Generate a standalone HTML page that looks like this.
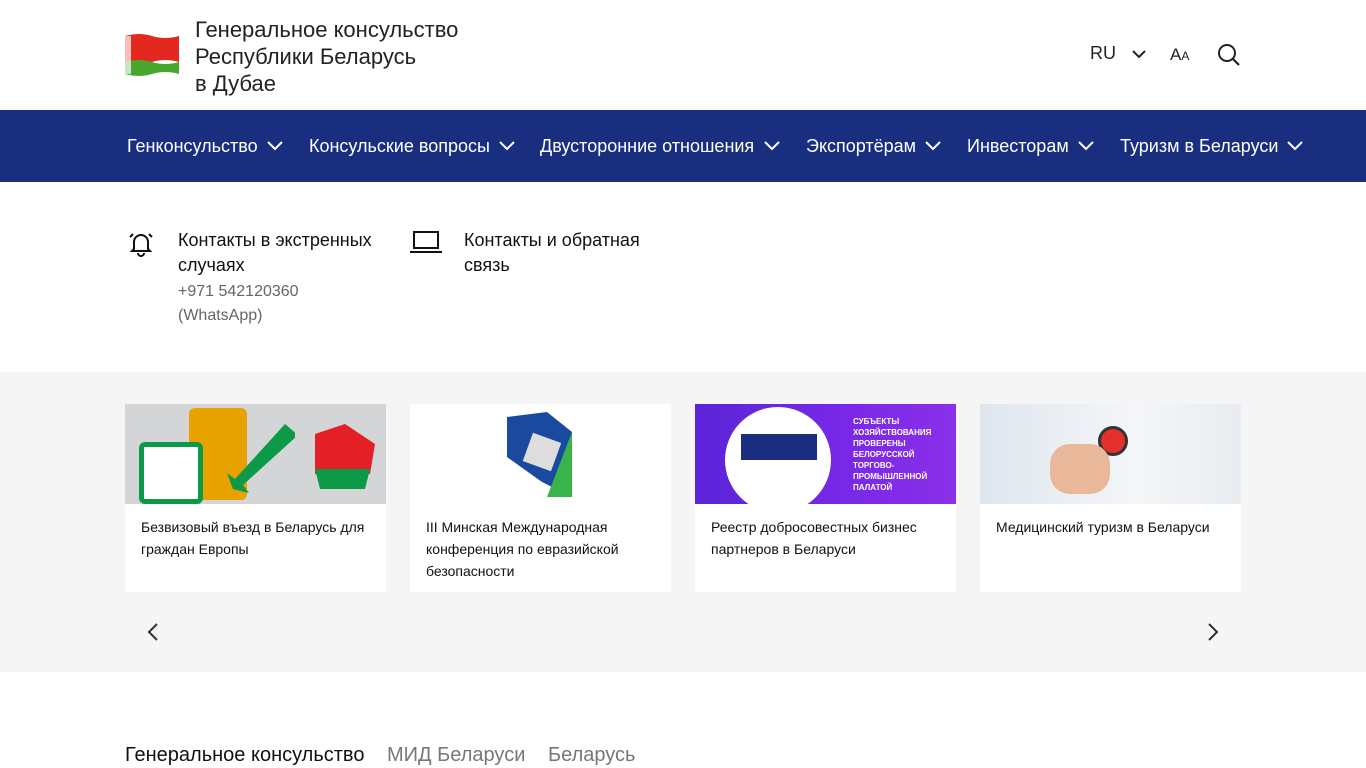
<!DOCTYPE html>
<html><head><meta charset="utf-8"><style>
*{margin:0;padding:0;box-sizing:border-box}
body{width:1366px;height:768px;overflow:hidden;font-family:"Liberation Sans",sans-serif;background:#fff;color:#222;position:relative}
.abs{position:absolute}
.nav{top:110px;left:0;width:1366px;height:72px;background:#1a2e80}
.nav span{position:absolute;top:26px;color:#fff;font-size:18px;white-space:nowrap}
.gray{top:372px;left:0;width:1366px;height:300px;background:#f5f5f5}
.card{position:absolute;top:404px;width:261px;height:188px;background:#fff}
.card .img{height:100px;position:relative;overflow:hidden}
.card p{padding:12px 16px;font-size:14px;line-height:22px;color:#111}
</style></head><body>
<svg class="abs" style="left:125px;top:32px" width="54" height="44" viewBox="0 0 54 44"><path d="M0 4 Q14 0 27 4 T54 4 V30 Q40 26 27 30 T0 30Z" fill="#e3281f"/><path d="M0 30 Q14 26 27 30 T54 30 V42 Q40 38 27 42 T0 42Z" fill="#4aa72e"/><rect x="0" y="4" width="6" height="38" fill="#fff" opacity=".7"/></svg>
<div class="abs" style="left:195px;top:16px;font-size:22px;line-height:27px;color:#222">Генеральное консульство<br>Республики Беларусь<br>в Дубае</div>
<div class="abs" style="left:1090px;top:43px;font-size:18px">RU</div>
<svg class="abs" style="left:1131px;top:48px" width="16" height="12"><path d="M2 3l6 6 6-6" stroke="#222" stroke-width="2" fill="none"/></svg>
<div class="abs" style="left:1170px;top:45px;font-size:17px">A<span style="font-size:12px">A</span></div>
<svg class="abs" style="left:1217px;top:43px" width="24" height="24"><circle cx="10" cy="10" r="8" stroke="#222" stroke-width="2" fill="none"/><path d="M16 16l6 6" stroke="#222" stroke-width="2.2"/></svg>
<div class="abs nav">
<span style="left:127px">Генконсульство</span><span style="left:309px">Консульские вопросы</span><span style="left:540px">Двусторонние отношения</span><span style="left:806px">Экспортёрам</span><span style="left:967px">Инвесторам</span><span style="left:1120px">Туризм в Беларуси</span>
<svg width="1366" height="72" style="position:absolute;left:0;top:0"><g stroke="#fff" stroke-width="2" fill="none"><path d="M268 32l7 7 7-7"/><path d="M500 32l7 7 7-7"/><path d="M765 32l7 7 7-7"/><path d="M926 32l7 7 7-7"/><path d="M1079 32l7 7 7-7"/><path d="M1288 32l7 7 7-7"/></g></svg>
</div>
<svg class="abs" style="left:127px;top:229px" width="28" height="28"><g stroke="#111" stroke-width="2" fill="none"><path d="M7 20V13a7 7 0 0 1 14 0v7l2 2H5z"/><path d="M11 24a3 3 0 0 0 6 0"/><path d="M3 8l3-3M25 8l-3-3"/></g></svg>
<div class="abs" style="left:178px;top:228px;font-size:18px;line-height:25px;color:#111">Контакты в экстренных<br>случаях</div>
<div class="abs" style="left:178px;top:280px;font-size:16px;line-height:24px;color:#666">+971 542120360<br>(WhatsApp)</div>
<svg class="abs" style="left:410px;top:230px" width="32" height="24"><rect x="4" y="2" width="24" height="16" stroke="#111" stroke-width="2" fill="none"/><path d="M0 22h32" stroke="#111" stroke-width="2"/></svg>
<div class="abs" style="left:464px;top:228px;font-size:18px;line-height:25px;color:#111">Контакты и обратная<br>связь</div>
<div class="abs gray"></div>
<div class="card" style="left:125px"><div class="img" style="background:#d4d5d7"><div class="abs" style="left:64px;top:4px;width:58px;height:92px;background:#e8a200;border-radius:6px"></div><div class="abs" style="left:14px;top:38px;width:64px;height:62px;background:#fff;border:5px solid #0c9a48;border-radius:6px"></div><svg class="abs" style="left:90px;top:15px" width="80" height="80"><path d="M70 5L20 60l-8-6 6 16 16 4-6-8 55-50z" fill="#0c9a48"/></svg><svg class="abs" style="left:170px;top:10px" width="90" height="80"><path d="M20 20l30-10 30 20-5 30H20z" fill="#e41f25"/><path d="M20 55h55l-5 20H25z" fill="#0c9a48"/></svg></div><p>Безвизовый въезд в Беларусь для граждан Европы</p></div>
<div class="card" style="left:410px"><div class="img"><svg class="abs" style="left:92px;top:8px" width="80" height="90"><path d="M5 5L45 0 70 20v65L40 70 5 45z" fill="#1a4aa0"/><rect x="25" y="25" width="30" height="30" fill="#ddd" transform="rotate(20 40 40)"/><path d="M70 20v65H45" fill="#38b44a"/></svg></div><p>III Минская Международная конференция по евразийской безопасности</p></div>
<div class="card" style="left:695px"><div class="img" style="background:linear-gradient(90deg,#5a24d8,#7a28e8 60%,#8a30e8)"><div class="abs" style="left:30px;top:3px;width:106px;height:106px;border-radius:50%;background:#fff"></div><div class="abs" style="left:46px;top:30px;width:76px;height:26px;background:#1a2e80"></div><div class="abs" style="left:158px;top:12px;color:#fff;font-size:8px;line-height:11px;font-weight:bold">СУБЪЕКТЫ<br>ХОЗЯЙСТВОВАНИЯ<br>ПРОВЕРЕНЫ<br>БЕЛОРУССКОЙ<br>ТОРГОВО-<br>ПРОМЫШЛЕННОЙ<br>ПАЛАТОЙ</div></div><p>Реестр добросовестных бизнес партнеров в Беларуси</p></div>
<div class="card" style="left:980px"><div class="img" style="background:linear-gradient(90deg,#dfe6ee,#f4f6f8 60%,#e8ecf0)"><div class="abs" style="left:118px;top:22px;width:30px;height:30px;border-radius:50%;background:#e4302a;border:3px solid #333"></div><div class="abs" style="left:70px;top:40px;width:60px;height:50px;background:#e9b89a;border-radius:20px"></div></div><p>Медицинский туризм в Беларуси</p></div>
<svg class="abs" style="left:145px;top:622px" width="16" height="20"><path d="M12 2l-8 8 8 8" stroke="#333" stroke-width="2" fill="none"/></svg>
<svg class="abs" style="left:1205px;top:622px" width="16" height="20"><path d="M4 2l8 8-8 8" stroke="#333" stroke-width="2" fill="none"/></svg>
<div class="abs" style="left:125px;top:744px;font-size:20px;color:#111">Генеральное консульство</div>
<div class="abs" style="left:387px;top:744px;font-size:20px;color:#777">МИД Беларуси</div>
<div class="abs" style="left:548px;top:744px;font-size:20px;color:#777">Беларусь</div>
</body></html>
